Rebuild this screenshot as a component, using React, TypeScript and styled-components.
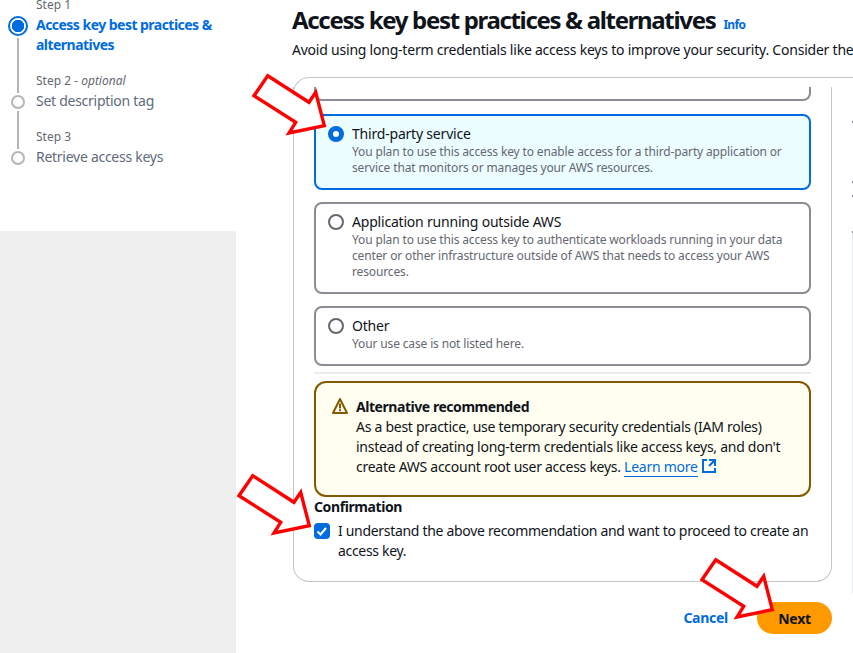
import React from 'react';
import styled, { createGlobalStyle } from 'styled-components';

const BLUE = '#006ce0';
const INK = '#0f141a';
const MUTED = '#656871';
const FONT = '"Noto Sans", "Liberation Sans", sans-serif';

const STEPS = [
  { label: 'Step 1', title: ['Access key best practices &', 'alternatives'], active: true },
  { label: 'Step 2', hint: 'optional', title: ['Set description tag'] },
  { label: 'Step 3', title: ['Retrieve access keys'] },
];

const TILES = [
  {
    title: 'Third-party service',
    text: 'You plan to use this access key to enable access for a third-party application or service that monitors or manages your AWS resources.',
    selected: true,
  },
  {
    title: 'Application running outside AWS',
    text: 'You plan to use this access key to authenticate workloads running in your data center or other infrastructure outside of AWS that needs to access your AWS resources.',
  },
  { title: 'Other', text: 'Your use case is not listed here.' },
];

// gaps between the little clipped marks at the right edge
const RAIL_TICKS = [31, 60, 14, 36];

const GlobalStyle = createGlobalStyle`
  html, body {
    margin: 0;
    padding: 0;
    background: #fff;
  }
  * {
    box-sizing: border-box;
  }
`;

const CalloutArrow = ({ x, y }: { x: number; y: number }): JSX.Element => (
  <ArrowSvg $x={x} $y={y} width="76" height="64" viewBox="0 0 76 64">
    <path
      d="M15.7 2.7 57 29.3 63.7 19.3 72.3 52.7 37 60 43.7 49.3 2 22.7Z"
      fill="#fff"
      stroke="#f00"
      strokeWidth="3.4"
      strokeLinejoin="miter"
    />
  </ArrowSvg>
);

const App = (): JSX.Element => {
  return (
    <>
      <GlobalStyle />
      <Page>
        <Sidebar>
          <StepList>
            {STEPS.map((step, i) => (
              <Step key={step.label} $last={i === STEPS.length - 1}>
                <StepMarker>
                  {i > 0 && <StepLineTop />}
                  <StepDot $active={step.active} />
                  {i < STEPS.length - 1 && <StepLineBottom />}
                </StepMarker>
                <div>
                  <StepLabel>
                    {step.label}
                    {step.hint && (
                      <>
                        {' - '}
                        <em>{step.hint}</em>
                      </>
                    )}
                  </StepLabel>
                  {step.title.map((line) => (
                    <StepTitle key={line} $active={step.active}>
                      {line}
                    </StepTitle>
                  ))}
                </div>
              </Step>
            ))}
          </StepList>
          <SidebarFill />
        </Sidebar>

        <Main>
          <Heading>
            <h1>Access key best practices &amp; alternatives</h1>
            <InfoLink>Info</InfoLink>
          </Heading>
          <Intro>
            Avoid using long-term credentials like access keys to improve your security. Consider the
            following use cases and alternatives.
          </Intro>

          <CardTop />
          <CardBody>
            <ClippedTile />
            {TILES.map((tile) => (
              <Tile key={tile.title} $selected={tile.selected}>
                <Radio $selected={tile.selected} />
                <div>
                  <TileTitle>{tile.title}</TileTitle>
                  <TileText>{tile.text}</TileText>
                </div>
              </Tile>
            ))}
            <Divider />
            <Alert>
              <svg width="16" height="16" viewBox="0 0 16 16" fill="none" stroke="#855900" strokeWidth="2" strokeLinejoin="round">
                <path d="M8 1 1 15h14Z" />
                <path d="M8 5.5v5M8 11.3v2" />
              </svg>
              <div>
                <AlertTitle>Alternative recommended</AlertTitle>
                <div>
                  As a best practice, use temporary security credentials (IAM roles) instead of creating
                  long-term credentials like access keys, and don't create AWS account root user access
                  keys. <LearnMore>Learn more</LearnMore>{' '}
                  <ExternalIcon width="16" height="16" viewBox="0 0 16 16" fill="none" stroke={BLUE} strokeWidth="2">
                    <path d="M14 8.01v-6H8M14.02 2 8 8M6 2H2v12h12v-4" />
                  </ExternalIcon>
                </div>
              </div>
            </Alert>
            <ConfirmTitle>Confirmation</ConfirmTitle>
            <ConfirmRow>
              <CheckBox>
                <svg width="16" height="16" viewBox="0 0 16 16" fill="none" stroke="#fff" strokeWidth="2">
                  <path d="M3.5 8.5 6.5 11.5 12 5" />
                </svg>
              </CheckBox>
              <ConfirmText>
                I understand the above recommendation and want to proceed to create an access key.
              </ConfirmText>
            </ConfirmRow>
          </CardBody>

          <Actions>
            <CancelLink>Cancel</CancelLink>
            <NextButton>Next</NextButton>
          </Actions>
        </Main>

        <Rail>
          {RAIL_TICKS.map((gap) => (
            <RailTick key={gap} $gap={gap} />
          ))}
          <RailLine />
        </Rail>

        <CalloutArrow x={252} y={73} />
        <CalloutArrow x={237} y={473} />
        <CalloutArrow x={700} y={557} />
      </Page>
    </>
  );
};

const Page = styled.div`
  position: relative;
  display: flex;
  width: 853px;
  height: 653px;
  overflow: hidden;
  background: #fff;
  color: ${INK};
  font-family: ${FONT};
  font-size: 14px;
  line-height: 20px;
  letter-spacing: -0.27px;
`;

const ArrowSvg = styled.svg<{ $x: number; $y: number }>`
  position: absolute;
  left: ${({ $x }) => `${$x}px`};
  top: ${({ $y }) => `${$y}px`};
`;

const Sidebar = styled.aside`
  display: flex;
  flex-direction: column;
  flex: 0 0 236px;
`;

const StepList = styled.ol`
  flex: 0 0 236px;
  margin: -5px 0 0;
  padding: 0 8px;
  list-style: none;
`;

const Step = styled.li<{ $last?: boolean }>`
  display: flex;
  padding-bottom: ${({ $last }) => ($last ? '0' : '16px')};
`;

const StepMarker = styled.div`
  display: flex;
  flex-direction: column;
  align-items: center;
  flex: 0 0 20px;
  margin-right: 8px;
  margin-bottom: -16px;
  padding-top: 21px;

  li:not(:first-child) > & {
    padding-top: 0;
  }
`;

const StepLineTop = styled.div`
  flex: 0 0 22px;
  width: 2px;
  margin-bottom: 2px;
  background: #b4b4bb;
`;

const StepLineBottom = styled.div`
  flex: 1;
  width: 2px;
  margin-top: 2px;
  background: #b4b4bb;
`;

const StepDot = styled.span<{ $active?: boolean }>`
  flex: none;
  width: ${({ $active }) => ($active ? '20px' : '14px')};
  height: ${({ $active }) => ($active ? '20px' : '14px')};
  border-radius: 50%;
  border: 2px solid ${({ $active }) => ($active ? BLUE : '#b4b4bb')};
  background: ${({ $active }) => ($active ? `radial-gradient(circle, ${BLUE} 0 6px, #fff 6.5px)` : '#fff')};
`;

const StepLabel = styled.div`
  color: ${MUTED};
  font-size: 12px;
  line-height: 20px;
  letter-spacing: 0;

  em {
    font-style: italic;
  }
`;

const StepTitle = styled.div<{ $active?: boolean }>`
  color: ${({ $active }) => ($active ? BLUE : '#5f6b7a')};
  font-weight: ${({ $active }) => ($active ? 700 : 400)};
  letter-spacing: ${({ $active }) => ($active ? '-0.53px' : '-0.27px')};
`;

const SidebarFill = styled.div`
  flex: 1;
  background: #efefef;
`;

const Main = styled.main`
  flex: 0 0 auto;
  width: 596px;
  padding-left: 56px;
`;

const Heading = styled.div`
  display: flex;
  align-items: baseline;
  gap: 8px;
  height: 40px;
  padding-top: 5px;

  h1 {
    margin: 0;
    font-size: 24px;
    line-height: 30px;
    font-weight: 700;
    letter-spacing: -1.33px;
    white-space: nowrap;
  }
`;

const InfoLink = styled.a`
  color: ${BLUE};
  font-size: 12px;
  font-weight: 700;
  letter-spacing: -0.7px;
`;

const Intro = styled.p`
  margin: 0;
  width: 700px;
  height: 37px;
  letter-spacing: -0.22px;
  white-space: nowrap;
`;

const CardTop = styled.div`
  width: 620px;
  height: 16px;
  margin: 0 0 -6px 1px;
  border-top: 1px solid #c6c6cd;
  border-left: 1px solid #c6c6cd;
  border-top-left-radius: 16px;
`;

const CardBody = styled.section`
  position: relative;
  width: 539px;
  height: 495px;
  margin-left: 1px;
  padding: 0 20px;
  overflow: hidden;
  border: 1px solid #c6c6cd;
  border-top: none;
  border-radius: 0 0 16px 16px;
`;

const ClippedTile = styled.div`
  height: 14px;
  margin-bottom: 13px;
  border: 2px solid #8c8c94;
  border-top: none;
  border-radius: 0 0 8px 8px;
`;

const Tile = styled.div<{ $selected?: boolean }>`
  display: flex;
  gap: 8px;
  margin-bottom: 12px;
  padding: 8px 12px 12px;
  border: 2px solid ${({ $selected }) => ($selected ? BLUE : '#8c8c94')};
  border-radius: 8px;
  background: ${({ $selected }) => ($selected ? '#ebfdff' : '#fff')};
`;

const Radio = styled.span<{ $selected?: boolean }>`
  flex: none;
  width: 16px;
  height: 16px;
  margin-top: 2px;
  border-radius: 50%;
  border: ${({ $selected }) => ($selected ? `5px solid ${BLUE}` : '2px solid #656871')};
  background: #fff;
`;

const TileTitle = styled.div`
  color: ${INK};
  letter-spacing: -0.2px;
`;

const TileText = styled.div`
  color: ${MUTED};
  font-size: 12px;
  line-height: 16px;
  letter-spacing: -0.14px;
`;

const Divider = styled.div`
  height: 2px;
  margin: -6px 0 7px;
  background: #e9ebed;
`;

const Alert = styled.div`
  display: flex;
  gap: 8px;
  height: 116px;
  padding: 14px 16px 18px;
  border: 2px solid #855900;
  border-radius: 12px;
  background: #fffef0;

  > svg {
    flex: none;
    margin-top: 1px;
  }
`;

const AlertTitle = styled.div`
  font-weight: 700;
  letter-spacing: -0.45px;
`;

const LearnMore = styled.a`
  color: ${BLUE};
  border-bottom: 1px solid ${BLUE};
`;

const ExternalIcon = styled.svg`
  vertical-align: -2px;
`;

const ConfirmTitle = styled.div`
  font-weight: 700;
  letter-spacing: -0.4px;
`;

const ConfirmRow = styled.label`
  display: flex;
  gap: 8px;
`;

const CheckBox = styled.span`
  flex: none;
  width: 16px;
  height: 16px;
  margin-top: 6px;
  border-radius: 4px;
  background: ${BLUE};
`;

const ConfirmText = styled.span`
  padding-top: 4px;
  letter-spacing: -0.31px;
`;

const Actions = styled.div`
  display: flex;
  align-items: center;
  justify-content: flex-end;
  gap: 29px;
  margin-top: 20px;
`;

const CancelLink = styled.a`
  color: ${BLUE};
  font-weight: 700;
`;

const NextButton = styled.button`
  width: 75px;
  height: 32px;
  border: none;
  border-radius: 16px;
  background: #f90;
  color: ${INK};
  font-family: ${FONT};
  font-size: 14px;
  font-weight: 700;
  letter-spacing: -0.3px;
`;

const Rail = styled.aside`
  display: flex;
  flex-direction: column;
  align-items: flex-end;
  flex: 1;
  padding-top: 92px;
`;

const RailTick = styled.span<{ $gap: number }>`
  width: 1px;
  height: 2px;
  margin-top: ${({ $gap }) => `${$gap - 2}px`};
  background: #8c8c94;
`;

const RailLine = styled.span`
  width: 1px;
  height: 360px;
  background: #e9ebed;
`;

export default App;
